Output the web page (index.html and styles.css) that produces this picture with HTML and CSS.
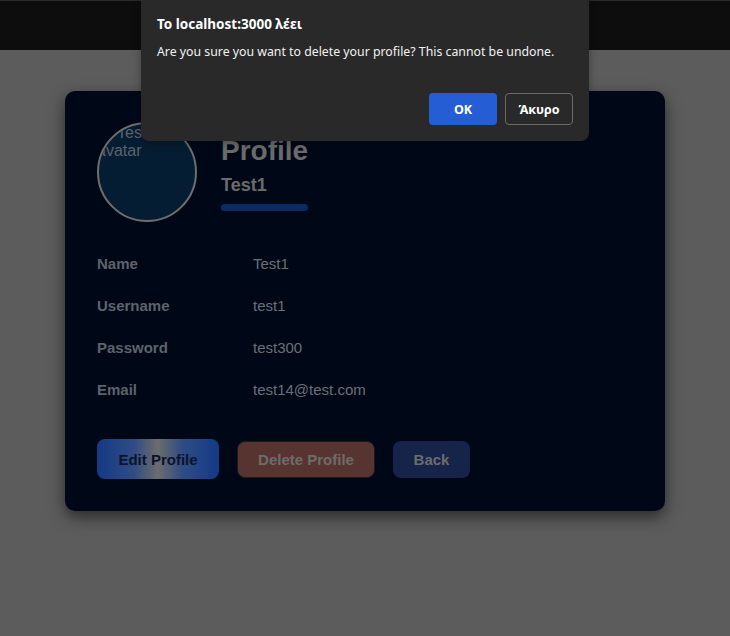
FILE: index.html
```html
<!DOCTYPE html>
<html lang="en">
<head>
<meta charset="utf-8">
<title>Profile</title>
<link rel="stylesheet" href="styles.css">
</head>
<body>
<header class="topbar"></header>
<main class="page">
  <section class="card">
    <div class="card-head">
      <div class="avatar"><span class="alt">Test avatar</span></div>
      <div class="titles">
        <h1 class="title">Profile</h1>
        <h2 class="subtitle">Test1</h2>
        <div class="underline"></div>
      </div>
    </div>
    <dl class="fields">
      <div class="row"><dt>Name</dt><dd>Test1</dd></div>
      <div class="row"><dt>Username</dt><dd>test1</dd></div>
      <div class="row"><dt>Password</dt><dd>test300</dd></div>
      <div class="row"><dt>Email</dt><dd>test14@test.com</dd></div>
    </dl>
    <div class="actions">
      <button class="btn btn-edit">Edit Profile</button>
      <button class="btn btn-delete">Delete Profile</button>
      <button class="btn btn-back">Back</button>
    </div>
  </section>
</main>
<div class="dialog" role="alertdialog">
  <div class="dialog-title">To localhost:3000 λέει</div>
  <div class="dialog-msg">Are you sure you want to delete your profile? This cannot be undone.</div>
  <div class="dialog-actions">
    <button class="dbtn dbtn-ok">OK</button>
    <button class="dbtn dbtn-cancel">Άκυρο</button>
  </div>
</div>
</body>
</html>
```
FILE: styles.css
```css
* { box-sizing: border-box; }
html, body { margin: 0; padding: 0; }
body {
  background: #5c5c5c;
  font-family: "Liberation Sans", Arial, sans-serif;
  width: 730px;
  height: 636px;
  overflow: hidden;
  position: relative;
}
.topbar {
  height: 50px;
  background: #0d0d0d;
  border-top: 1px solid #2a2a2a;
}
.page {
  padding: 41px 0 0 65px;
}
.card {
  width: 600px;
  height: 420px;
  background: #000818;
  border-radius: 10px;
  box-shadow: 0 6px 16px rgba(0,0,0,0.55);
  padding: 31px 32px 32px 32px;
  display: flex;
  flex-direction: column;
}
.card-head {
  display: flex;
  align-items: flex-start;
  gap: 24px;
}
.avatar {
  width: 100px;
  height: 100px;
  border-radius: 50%;
  border: 2px solid #6e6e6e;
  background: #051d33;
  overflow: hidden;
  flex: none;
}
.alt {
  display: block;
  font-size: 16px;
  line-height: 18px;
  color: #5a636d;
  text-indent: 20px;
  margin-top: 0;
  margin-left: -2px;
}
.titles {
  padding-top: 13px;
  display: flex;
  flex-direction: column;
  align-items: flex-start;
}
.title {
  margin: 0;
  font-size: 28px;
  line-height: 32px;
  font-weight: bold;
  color: #6b6b6b;
}
.subtitle {
  margin: 7px 0 0;
  font-size: 18px;
  line-height: 22px;
  font-weight: bold;
  color: #6b6b6b;
}
.underline {
  margin-top: 8px;
  width: 87px;
  height: 7px;
  border-radius: 4px;
  background: #0b2a66;
}
.fields {
  margin: 32px 0 0;
  display: flex;
  flex-direction: column;
  gap: 24px;
}
.row {
  display: flex;
  height: 18px;
  align-items: center;
}
.row dt {
  width: 156px;
  font-size: 15px;
  font-weight: bold;
  color: #5d636c;
}
.row dd {
  margin: 0;
  font-size: 15px;
  color: #6a6f77;
}
.actions {
  margin-top: 41px;
  display: flex;
  align-items: center;
  gap: 18px;
}
.btn {
  font-family: "Liberation Sans", Arial, sans-serif;
  font-size: 15px;
  font-weight: bold;
  border-radius: 8px;
  border: none;
  padding: 0;
}
.btn-edit {
  height: 40px;
  width: 122px;
  color: #0b1429;
  background: linear-gradient(90deg, #143a86 0%, #2f4c85 30%, #6c6c6c 50%, #2f4c85 70%, #143a86 100%);
}
.btn-delete {
  height: 37px;
  width: 138px;
  color: #6c6c6c;
  background: #573430;
  border: 1px solid #1f1a1a;
}
.btn-back {
  height: 37px;
  width: 77px;
  color: #6c6c6c;
  background: #16244a;
}
.dialog {
  position: absolute;
  left: 141px;
  top: 0;
  width: 448px;
  height: 141px;
  background: #292929;
  border-radius: 0 0 8px 8px;
  padding: 15px 16px 16px;
  font-family: "Noto Sans", "Open Sans", sans-serif;
  color: #ffffff;
  box-shadow: 0 2px 8px rgba(0,0,0,0.3);
  display: flex;
  flex-direction: column;
}
.dialog-title {
  font-size: 13.5px;
  font-weight: bold;
  line-height: 18px;
}
.dialog-msg {
  margin-top: 10px;
  font-size: 12.3px;
  line-height: 18px;
  color: #f2f2f2;
}
.dialog-actions {
  margin-top: auto;
  display: flex;
  justify-content: flex-end;
  gap: 8px;
}
.dbtn {
  width: 68px;
  height: 32px;
  border-radius: 4px;
  font-family: "Noto Sans", "Open Sans", sans-serif;
  font-size: 12.5px;
  font-weight: bold;
  color: #ffffff;
}
.dbtn-ok {
  background: #255ed4;
  border: none;
}
.dbtn-cancel {
  background: #292929;
  border: 1px solid #6b6b6b;
}
```
